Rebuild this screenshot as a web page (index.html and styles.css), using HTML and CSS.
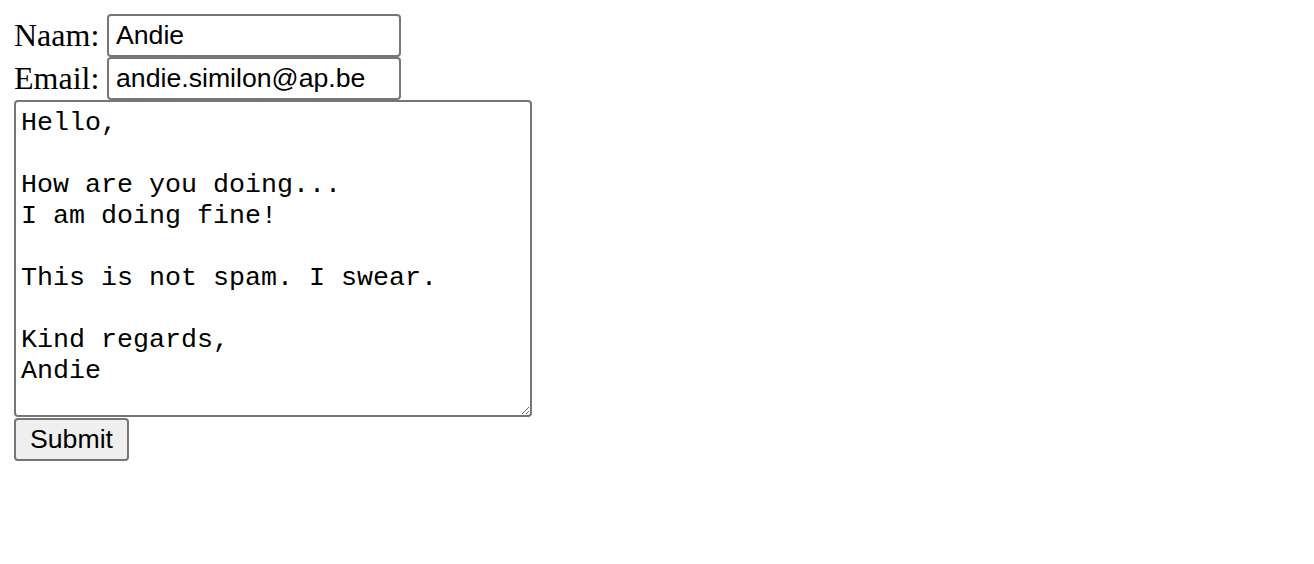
FILE: index.html
```html
<!DOCTYPE html>
<html>
<head>
<meta charset="utf-8">
<link rel="stylesheet" href="styles.css">
</head>
<body>
<form class="form">
  <div class="row"><label class="label" for="naam">Naam:</label><input class="field" id="naam" type="text" value="Andie"></div>
  <div class="row"><label class="label" for="email">Email:</label><input class="field" id="email" type="email" value="andie.similon@ap.be"></div>
  <textarea class="message">Hello,

How are you doing...
I am doing fine!

This is not spam. I swear.

Kind regards,
Andie</textarea>
  <button class="submit" type="submit">Submit</button>
</form>
</body>
</html>
```

FILE: styles.css
```css
html, body {
  margin: 0;
  padding: 0;
  background: #fff;
}
body {
  padding: 14px;
  font-family: "Liberation Serif", "Times New Roman", serif;
  font-size: 32px;
  color: #000;
}
.form {
  display: flex;
  flex-direction: column;
  align-items: flex-start;
}
.row {
  display: flex;
  align-items: center;
  height: 43px;
}
.label {
  width: 93px;
  line-height: 1;
  margin-top: -2px;
}
.field {
  box-sizing: border-box;
  width: 294px;
  height: 43px;
  margin: 0;
  padding: 0 7px;
  border: 2px solid #767676;
  border-radius: 4px;
  font-family: "Liberation Sans", Arial, sans-serif;
  font-size: 26.67px;
  color: #000;
  background: #fff;
}
.message {
  box-sizing: border-box;
  width: 518px;
  height: 317px;
  margin: 0;
  padding: 6px 5px 4px;
  border: 2px solid #767676;
  border-radius: 4px;
  font-family: "Liberation Mono", "Courier New", monospace;
  font-size: 26.67px;
  line-height: 31px;
  color: #000;
  background: #fff;
  resize: both;
}
.submit {
  box-sizing: border-box;
  width: 115px;
  height: 43px;
  margin-top: 1px;
  padding: 0 10px;
  border: 2px solid #767676;
  border-radius: 4px;
  background: #efefef;
  font-family: "Liberation Sans", Arial, sans-serif;
  font-size: 26.67px;
  color: #000;
}
```
